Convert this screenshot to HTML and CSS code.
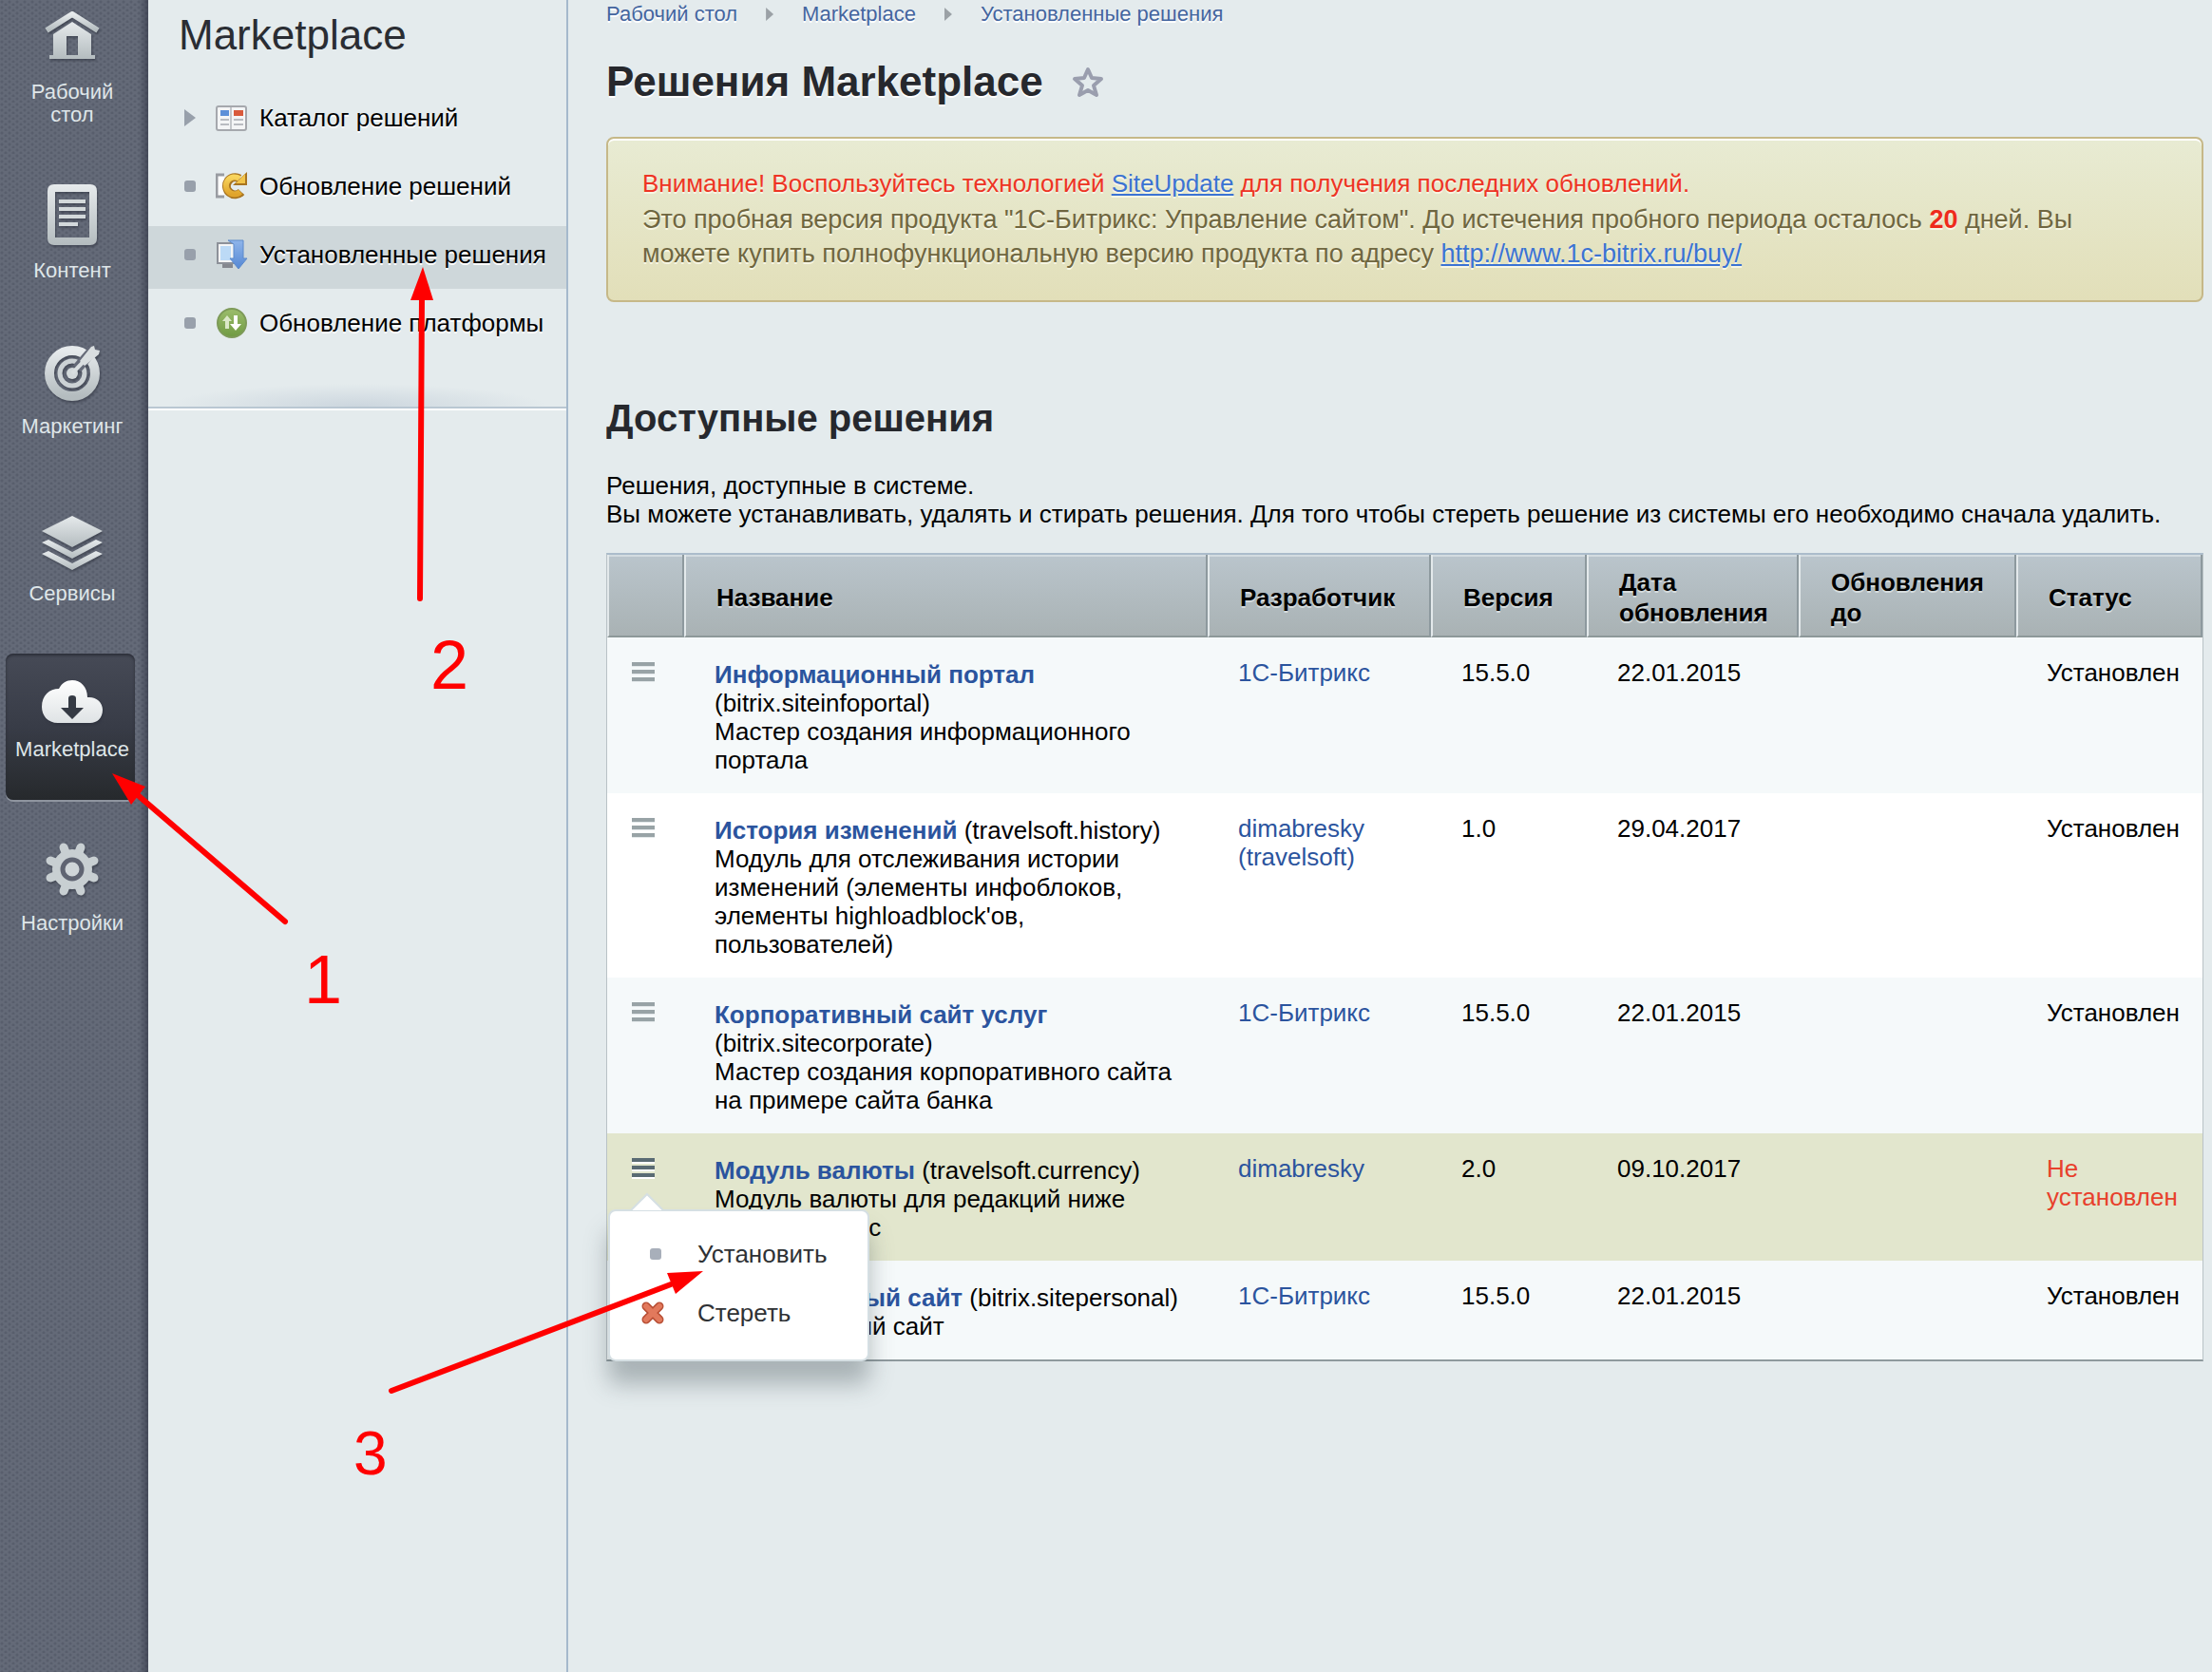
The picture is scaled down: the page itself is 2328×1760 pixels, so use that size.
FILE: index.html
```html
<!DOCTYPE html>
<html lang="ru">
<head>
<meta charset="utf-8">
<title>Решения Marketplace</title>
<link rel="stylesheet" href="styles.css">
</head>
<body>
<svg class="defs" width="0" height="0" aria-hidden="true">
  <defs>
    <linearGradient id="metal" x1="0" y1="0" x2="0" y2="1"><stop offset="0" stop-color="#e6eaec"/><stop offset="1" stop-color="#b4bcbf"/></linearGradient>
    <linearGradient id="snow" x1="0" y1="0" x2="0" y2="1"><stop offset="0" stop-color="#fff"/><stop offset="1" stop-color="#dfe3e5"/></linearGradient>
    <linearGradient id="gold" x1="0" y1="0" x2="0" y2="1"><stop offset="0" stop-color="#f8d45c"/><stop offset="1" stop-color="#e0a42c"/></linearGradient>
    <linearGradient id="blue" x1="0" y1="0" x2="0" y2="1"><stop offset="0" stop-color="#8fb5ea"/><stop offset="1" stop-color="#5588d4"/></linearGradient>
    <linearGradient id="green" x1="0" y1="0" x2="0" y2="1"><stop offset="0" stop-color="#9cbd6c"/><stop offset="1" stop-color="#6f9a42"/></linearGradient>
  </defs>
</svg>
<div class="layout">
  <nav class="rail" aria-label="Разделы">
    <a href="#" class="rail-item rail-home">
      <svg width="58" height="52" viewBox="0 0 58 52"><path fill="none" stroke="url(#metal)" stroke-width="6" d="M2 20 29 3 56 20"/><path fill="url(#metal)" fill-rule="evenodd" d="M29 11 49 24V46H53V50H5V46H9V24ZM23 26V46H35V26Z"/></svg>
      <span>Рабочий стол</span>
    </a>
    <a href="#" class="rail-item rail-content">
      <svg width="52" height="64" viewBox="0 0 52 64"><path fill="url(#metal)" fill-rule="evenodd" d="M7 0H45Q52 0 52 7V57Q52 64 45 64H7Q0 64 0 57V7Q0 0 7 0ZM8 8V56H44V8Z"/><path fill="#d3d9db" d="M12 16H40V20H12ZM12 24H40V28H12ZM12 32H40V36H12ZM12 40H32V44H12Z"/></svg>
      <span>Контент</span>
    </a>
    <a href="#" class="rail-item rail-marketing">
      <svg width="60" height="60" viewBox="0 0 60 60"><circle cx="30" cy="31" r="24" fill="none" stroke="url(#metal)" stroke-width="10"/><circle cx="30" cy="31" r="13" fill="none" stroke="#ccd2d5" stroke-width="5"/><circle cx="30" cy="31" r="6" fill="#d3d9db"/><path stroke="#656a78" stroke-width="11" d="M35 26 54 4"/><path stroke="#d9dee0" stroke-width="4" d="M30 31 50 10"/><path fill="#d9dee0" d="M38 18 50 3 53 2 54 6 59 7 58 11 43 23Z"/></svg>
      <span>Маркетинг</span>
    </a>
    <a href="#" class="rail-item rail-services">
      <svg width="64" height="58" viewBox="0 0 64 58"><g fill="url(#metal)"><path d="M32 0 64 16 32 33 0 16Z"/><path d="M0 28 7 25 32 38 57 25 64 28 32 45Z"/><path d="M0 40 7 37 32 50 57 37 64 40 32 57Z"/></g></svg>
      <span>Сервисы</span>
    </a>
    <a href="#" class="rail-item rail-market is-active" aria-current="page">
      <svg width="66" height="46" viewBox="0 0 66 46"><path fill="url(#snow)" d="M18 45C7 45 1 37 1 28C1 16 9 9 19 9C22 3 27 0 33 0C42 0 49 7 49 18C58 17 65 23 65 31C65 40 59 45 52 45Z"/><path fill="#353a44" d="M29 19Q29 16 33 16T37 19V29H45L33 41 21 29H29Z"/></svg>
      <span>Marketplace</span>
    </a>
    <a href="#" class="rail-item rail-settings">
      <svg width="58" height="58" viewBox="-29 -29 58 58"><g stroke="#c8cfd2" stroke-width="9" stroke-linecap="round"><path d="M-9-23 9 23M9-23-9 23M-23-9 23 9M-23 9 23-9"/></g><circle r="21" fill="#c8cfd2"/><circle r="10" fill="#cfd5d8" stroke="#5f6472" stroke-width="5"/></svg>
      <span>Настройки</span>
    </a>
  </nav>

  <aside class="side">
    <div class="side-title">Marketplace</div>
    <ul class="side-menu">
      <li><a href="#"><i class="mark mark-arrow"></i>
        <svg width="34" height="32" viewBox="0 0 34 32"><rect x="1" y="4" width="31" height="25" rx="2" fill="#f4f5f6" stroke="#a5a8ad" stroke-width="2"/><path stroke="#c4c7cb" stroke-width="2" d="M16 5V28"/><path fill="#5c8fd8" d="M5 8H14V14H5Z"/><path fill="#d95a3c" d="M19 8H29V14H19Z"/><path stroke="#b9bcc1" stroke-width="2" d="M5 18H14M5 23H14M19 18H29M19 23H29"/></svg>
        Каталог решений</a></li>
      <li><a href="#"><i class="mark"></i>
        <svg width="34" height="32" viewBox="0 0 34 32"><path fill="#fff" stroke="#999ca2" stroke-width="3" d="M9 4H1V27H9"/><path fill="none" stroke="#a87420" stroke-width="9" d="M25 8A9 9 0 1 0 27 22"/><path fill="#a87420" d="M33 1V15H18Z"/><path fill="none" stroke="url(#gold)" stroke-width="6" d="M25 8A9 9 0 1 0 26 22"/><path fill="#f2c44a" d="M31 3V13H21Z"/></svg>
        Обновление решений</a></li>
      <li class="is-current"><a href="#" aria-current="page"><i class="mark"></i>
        <svg width="34" height="32" viewBox="0 0 34 32"><path fill="#f4f5f6" stroke="#8d9199" stroke-width="2" d="M2 4H20V25H2Z"/><path fill="#bcdaf6" d="M5 7H16V22H5Z"/><path fill="#85888f" d="M7 26H18V30H7Z"/><path fill="url(#blue)" stroke="#5d8acb" d="M13 1H29V20H33L24 31 15 20H19V5Z"/></svg>
        Установленные решения</a></li>
      <li><a href="#"><i class="mark"></i>
        <svg width="34" height="34" viewBox="0 0 34 34"><circle cx="17" cy="17" r="15" fill="url(#green)" stroke="#7d9a58" stroke-width="2"/><path fill="#dbe8c8" d="M7 15 12 9 17 15H14V23H10V15Z"/><path fill="#fff" d="M19 9H23V18H27L21 25 15 18H19Z"/></svg>
        Обновление платформы</a></li>
    </ul>
  </aside>

  <main class="main">
    <nav class="crumbs" aria-label="Навигация">
      <a href="#">Рабочий стол</a><i></i><a href="#">Marketplace</a><i></i><a href="#">Установленные решения</a>
    </nav>
    <div class="heading">
      <h1>Решения Marketplace</h1>
      <button type="button" class="star" aria-label="Добавить в избранное"><svg width="34" height="34" viewBox="0 0 34 34"><path fill="none" stroke="#9a9eae" stroke-width="4" stroke-linejoin="round" d="M17 4 21 13 31 14 23 21 26 31 17 26 8 31 11 21 3 14 13 13Z"/></svg></button>
    </div>
    <div class="notice">
      <p class="notice-alert">Внимание! Воспользуйтесь технологией <a href="#">SiteUpdate</a> для получения последних обновлений.</p>
      <p class="notice-text">Это пробная версия продукта "1С-Битрикс: Управление сайтом". До истечения пробного периода осталось <b>20</b> дней. Вы можете купить полнофункциональную версию продукта по адресу <a href="#">http://www.1c-bitrix.ru/buy/</a></p>
    </div>
    <h2>Доступные решения</h2>
    <p class="intro">Решения, доступные в системе.<br>Вы можете устанавливать, удалять и стирать решения. Для того чтобы стереть решение из системы его необходимо сначала удалить.</p>

    <table class="grid">
      <colgroup><col class="c-menu"><col><col class="c-dev"><col class="c-ver"><col class="c-date"><col class="c-until"><col class="c-status"></colgroup>
      <thead>
        <tr><th></th><th>Название</th><th>Разработчик</th><th>Версия</th><th>Дата обновления</th><th>Обновления до</th><th>Статус</th></tr>
      </thead>
      <tbody>
        <tr>
          <td><button type="button" class="burger" aria-label="Действия"><i></i><i></i><i></i></button></td>
          <td><a href="#"><b>Информационный портал</b></a> (bitrix.siteinfoportal)<br>Мастер создания информационного портала</td>
          <td><a href="#">1С-Битрикс</a></td><td>15.5.0</td><td>22.01.2015</td><td></td><td>Установлен</td>
        </tr>
        <tr>
          <td><button type="button" class="burger" aria-label="Действия"><i></i><i></i><i></i></button></td>
          <td><a href="#"><b>История изменений</b></a> (travelsoft.history)<br>Модуль для отслеживания истории изменений (элементы инфоблоков, элементы highloadblock'ов, пользователей)</td>
          <td><a href="#">dimabresky (travelsoft)</a></td><td>1.0</td><td>29.04.2017</td><td></td><td>Установлен</td>
        </tr>
        <tr>
          <td><button type="button" class="burger" aria-label="Действия"><i></i><i></i><i></i></button></td>
          <td><a href="#"><b>Корпоративный сайт услуг</b></a> (bitrix.sitecorporate)<br>Мастер создания корпоративного сайта на примере сайта банка</td>
          <td><a href="#">1С-Битрикс</a></td><td>15.5.0</td><td>22.01.2015</td><td></td><td>Установлен</td>
        </tr>
        <tr class="is-open">
          <td>
            <button type="button" class="burger" aria-label="Действия" aria-expanded="true"><i></i><i></i><i></i></button>
            <div class="popup">
              <svg class="popup-tip" width="34" height="20" viewBox="0 0 34 20"><path fill="#fff" stroke="#d5dfe3" stroke-width="2" d="M0 19 17 2 34 19"/></svg>
              <button type="button"><i class="mark"></i>Установить</button>
              <button type="button"><svg width="26" height="26" viewBox="0 0 26 26"><path stroke="#b84f35" stroke-width="9" stroke-linecap="round" d="M6 6 20 20M20 6 6 20"/><path stroke="#e2795c" stroke-width="6" stroke-linecap="round" d="M6 6 20 20M20 6 6 20"/></svg>Стереть</button>
            </div>
          </td>
          <td><a href="#"><b>Модуль валюты</b></a> (travelsoft.currency)<br>Модуль валюты для редакций ниже Малый бизнес</td>
          <td><a href="#">dimabresky</a></td><td>2.0</td><td>09.10.2017</td><td></td><td class="is-off">Не установлен</td>
        </tr>
        <tr>
          <td><button type="button" class="burger" aria-label="Действия"><i></i><i></i><i></i></button></td>
          <td><a href="#"><b>Персональный сайт</b></a> (bitrix.sitepersonal)<br>Персональный сайт</td>
          <td><a href="#">1С-Битрикс</a></td><td>15.5.0</td><td>22.01.2015</td><td></td><td>Установлен</td>
        </tr>
      </tbody>
    </table>
  </main>
</div>

<div class="notes">
  <svg width="800" height="1600" viewBox="0 0 800 1600" fill="#f00" stroke="#f00" stroke-linecap="round">
    <path stroke-width="6" d="M145 837 300 970"/><path stroke="none" d="M118 814 153 828 138 847Z"/>
    <path stroke-width="6" d="M444 312 442 630"/><path stroke="none" d="M445 281 456 316H432Z"/>
    <path stroke-width="6" d="M706 1352 412 1464"/><path stroke="none" d="M740 1338 702 1340 711 1362Z"/>
  </svg>
  <span class="note note-1">1</span>
  <span class="note note-2">2</span>
  <span class="note note-3">3</span>
</div>
</body>
</html>
```
FILE: styles.css
```css
* { box-sizing: border-box; }

body {
  margin: 0;
  position: relative;
  background: #e4ebed;
  color: #000;
  font: 26px/30px "Liberation Sans", Arial, sans-serif;
}

.defs { position: absolute; }
svg { display: block; flex: none; }
p, h1, h2, ul { margin: 0; padding: 0; }
a { color: #2b549e; text-decoration: none; }
button { border: 0; padding: 0; background: none; font: inherit; color: inherit; }

.layout { display: flex; min-height: 100vh; }

/* Left rail */
.rail {
  flex: 0 0 156px;
  min-width: 0;
  padding: 0 14px 0 6px;
  display: flex;
  flex-direction: column;
  background-color: #646a78;
  background-image:
    linear-gradient(to left, rgba(40, 44, 60, .5), rgba(40, 44, 60, 0) 10px),
    radial-gradient(circle at 2px 2px, rgba(60, 66, 80, .3) 1px, transparent 2px),
    radial-gradient(circle at 6px 5px, rgba(60, 66, 80, .3) 1px, transparent 2px);
  background-size: 100% 100%, 8px 6px, 8px 6px;
}
.rail-item {
  padding: 0 0 0 4px;
  display: flex;
  flex-direction: column;
  align-items: center;
  color: #dfe6e9;
  font-size: 22px;
  line-height: 24px;
  text-align: center;
}
.rail-item svg { filter: drop-shadow(1px 2px 1px rgba(40, 44, 56, .5)); }
.rail-home { height: 194px; padding-top: 12px; }
.rail-home span { margin-top: 21px; }
.rail-content { height: 168px; }
.rail-content span { margin-top: 15px; }
.rail-marketing { height: 181px; }
.rail-marketing span { margin-top: 15px; }
.rail-services { height: 145px; }
.rail-services span { margin-top: 12px; }
.rail-market { height: 154px; padding-top: 28px; }
.rail-market span { margin-top: 15px; }
.rail-settings { padding-top: 44px; }
.rail-settings span { margin-top: 16px; }
.rail-item.is-active {
  border-radius: 8px;
  background: linear-gradient(#464a56, #383c47 50%, #26292c);
  box-shadow: inset 0 2px 3px #2b2e38, 0 2px 0 #8f959f;
}

/* Section menu */
.side {
  flex: 0 0 442px;
  border-right: 2px solid #a5b9cc;
}
.side-title {
  padding: 12px 32px 32px;
  font-size: 44px;
  line-height: 50px;
  color: #2a2d33;
}
.side-menu {
  display: flex;
  flex-direction: column;
  gap: 6px;
  padding-bottom: 52px;
  list-style: none;
  border-bottom: 2px solid #b9c7d2;
  box-shadow: 0 2px 0 #fff;
  background: radial-gradient(ellipse 200px 24px at 50% 100%, #ccd6de, transparent) no-repeat;
}
.side-menu a {
  display: flex;
  align-items: center;
  height: 66px;
  padding: 0 0 6px 38px;
  color: #000;
  white-space: nowrap;
  text-shadow: 0 2px 0 #fff;
}
.side-menu svg { margin: 0 12px 0 21px; }
.side-menu .is-current { background: #ced7da; }
.mark {
  flex: none;
  width: 12px;
  height: 12px;
  border-radius: 3px;
  background: #98a0ab;
}
.side-menu .mark-arrow {
  border-radius: 0;
  width: 12px;
  height: 18px;
  clip-path: polygon(0 0, 100% 50%, 0 100%);
}

/* Content */
.main { flex: 1; min-width: 0; padding: 0 9px 0 40px; }
.crumbs {
  display: flex;
  align-items: center;
  height: 30px;
  font-size: 22px;
  text-shadow: 0 2px 0 #fff;
}
.crumbs a { color: #44659f; }
.crumbs i {
  width: 8px;
  height: 14px;
  margin: 0 30px;
  background: #9ba1a6;
  clip-path: polygon(0 0, 100% 50%, 0 100%);
}
.heading { display: flex; align-items: center; gap: 30px; padding: 30px 0 32px; }
h1, h2 { color: #26282d; font-weight: bold; }
h1 { font-size: 44px; line-height: 52px; text-shadow: 0 2px 0 #fff; }
.notice {
  min-height: 174px;
  padding: 29px 36px;
  border: 2px solid #c6b888;
  border-radius: 8px;
  background: linear-gradient(#e8ebd3, #e2dfb9);
  box-shadow: inset 0 2px 0 #fff;
  color: #6f6640;
  line-height: 36px;
  text-shadow: 0 2px 0 #f7f6e4;
}
.notice-alert { margin-bottom: 2px; color: #ee3424; }
.notice-text { font-size: 27px; }
.notice a { color: #3b73d3; text-decoration: underline; }
.notice b { color: #ee2b1c; }
h2 { margin-top: 102px; font-size: 40px; line-height: 40px; }
.intro { margin: 36px 0 26px; }

/* Solutions table */
.grid {
  width: 100%;
  table-layout: fixed;
  border-collapse: separate;
  border-spacing: 0;
  border: 1px solid #b9c2c6;
  border-top: 2px solid #abbccb;
  border-bottom: 2px solid #8f9a9e;
}
.c-menu { width: 81px; }
.c-dev { width: 235px; }
.c-ver { width: 164px; }
.c-date { width: 223px; }
.c-until { width: 229px; }
.c-status { width: 196px; }
.grid th {
  height: 87px;
  padding: 8px 32px 4px 32px;
  border-left: 2px solid #e3e9eb;
  border-right: 2px solid #8d999e;
  border-bottom: 2px solid #8d9899;
  background: linear-gradient(#bac5cc, #a9b2b4);
  box-shadow: inset 0 2px 0 #d3dbe0;
  line-height: 32px;
  text-align: left;
  text-shadow: 0 2px 0 #d5dcde;
}
.grid td {
  padding: 22px 12px 22px 32px;
  background: #f5f9fa;
  vertical-align: top;
}
.grid td:nth-child(2) { padding-top: 24px; padding-bottom: 20px; }
.grid tr:nth-child(even) td { background: #fff; }
.grid tr.is-open td { background: #e2e6cd; }
.grid td:first-child { position: relative; padding-left: 26px; }
.grid td.is-off { color: #e8402c; }
.burger { display: flex; flex-direction: column; gap: 4px; padding-top: 4px; }
.burger i { width: 24px; height: 4px; background: #98a3a6; box-shadow: 0 1px 0 #e3e8ea; }
.is-open .burger i { background: #5a6b73; box-shadow: 0 2px 0 #fff; }

/* Row actions */
.popup {
  position: absolute;
  z-index: 1;
  top: 80px;
  left: 1px;
  width: 275px;
  padding: 14px 0 18px;
  border: 2px solid #d5dfe3;
  border-radius: 8px;
  background: #fff;
  box-shadow: 0 24px 24px rgba(60, 75, 80, .35);
}
.popup-tip { position: absolute; top: -20px; left: 22px; }
.popup button {
  display: flex;
  align-items: center;
  width: 100%;
  height: 62px;
  padding-left: 32px;
  color: #2f3235;
}
.popup button .mark { margin: 0 38px 0 10px; background: #a8afba; }
.popup button svg { margin: 0 34px 0 0; }

/* Hand-drawn step marks over the page */
.notes { position: absolute; inset: 0; overflow: hidden; pointer-events: none; z-index: 2; }
.note { position: absolute; color: #f00; font-size: 72px; line-height: 72px; }
.note-1 { left: 320px; top: 995px; }
.note-2 { left: 453px; top: 664px; }
.note-3 { left: 372px; top: 1494px; font-size: 64px; }
```
